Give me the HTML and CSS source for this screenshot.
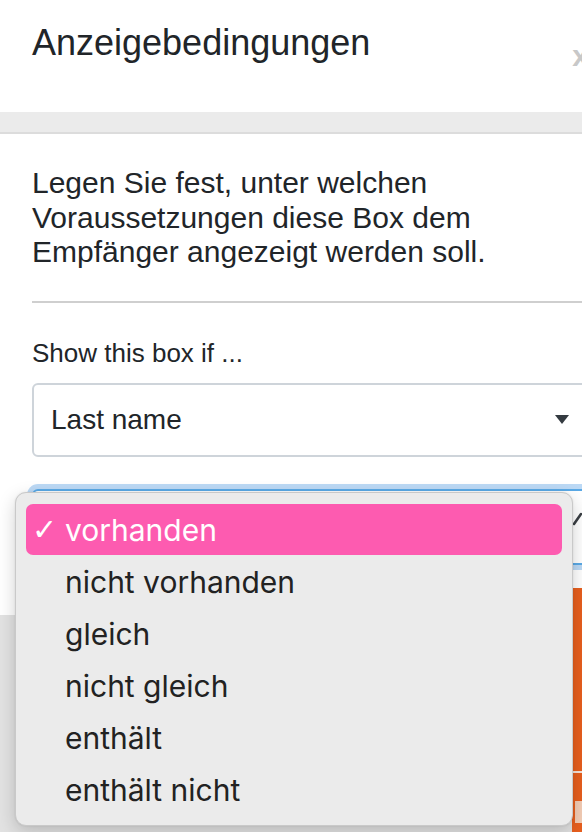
FILE: index.html
```html
<!DOCTYPE html>
<html lang="de">
<head>
<meta charset="utf-8">
<title>Anzeigebedingungen</title>
<link rel="stylesheet" href="styles.css">
</head>
<body>
<div class="modal">
  <div class="modal-header">
    <h4 class="modal-title">Anzeigebedingungen</h4>
    <span class="close">x</span>
  </div>
  <div class="band"></div>
  <div class="modal-body">
    <p class="intro">Legen Sie fest, unter welchen Voraussetzungen diese Box dem Empfänger angezeigt werden soll.</p>
    <hr class="divider">
    <label class="label">Show this box if ...</label>
    <div class="select">
      <span class="select-value">Last name</span>
      <svg class="caret" width="14" height="9" viewBox="0 0 14 9"><path d="M0 0H14L7 9Z" fill="#343a40"/></svg>
    </div>
    <div class="select focused">
      <span class="select-value">vorhanden</span>
      <svg class="chev" width="12" height="14" viewBox="0 0 12 14"><path d="M2 12L9 2" stroke="#3a3f44" stroke-width="2.6" stroke-linecap="round" fill="none"/></svg>
    </div>
  </div>
  <div class="modal-footer"></div>
</div>

<div class="side-button">
  <div class="side-line"></div>
  <div class="side-chip"></div>
</div>

<ul class="menu">
  <li class="item selected"><span class="check">✓</span><span>vorhanden</span></li>
  <li class="item"><span class="check"></span><span>nicht vorhanden</span></li>
  <li class="item"><span class="check"></span><span>gleich</span></li>
  <li class="item"><span class="check"></span><span>nicht gleich</span></li>
  <li class="item"><span class="check"></span><span>enthält</span></li>
  <li class="item"><span class="check"></span><span>enthält nicht</span></li>
</ul>
</body>
</html>
```

FILE: styles.css
```css
html, body {
  margin: 0;
  padding: 0;
  overflow: hidden;
  height: 832px;
}
body {
  background: #e2e2e2;
  font-family: "Liberation Sans", Arial, Helvetica, sans-serif;
  color: #212529;
  position: relative;
}
.modal {
  width: 640px;
  display: flex;
  flex-direction: column;
}
.modal-header {
  height: 112px;
  box-sizing: border-box;
  background: #fff;
  display: flex;
  align-items: flex-start;
  padding: 23px 0 0 32px;
}
.modal-title {
  margin: 0;
  font-size: 36px;
  font-weight: normal;
  line-height: 40px;
  color: #212529;
  white-space: nowrap;
}
.close {
  margin-left: 202px;
  margin-top: 18px;
  font-size: 30px;
  line-height: 30px;
  font-weight: bold;
  color: #c8c8c8;
}
.band {
  height: 20px;
  background: #ebebeb;
  border-bottom: 2px solid #dcdcdc;
}
.modal-body {
  background: #fff;
  padding: 32px 52px 48px 32px;
  height: 481px;
  box-sizing: border-box;
}
.intro {
  margin: 0;
  max-width: 470px;
  font-size: 30px;
  line-height: 34.5px;
}
.divider {
  margin: 31px -52px 0 0;
  border: 0;
  height: 2px;
  background: #cfcfcf;
}
.label {
  display: block;
  margin-top: 35px;
  font-size: 26px;
  line-height: 30px;
}
.select {
  margin-top: 15px;
  height: 74px;
  box-sizing: border-box;
  border: 2px solid #ced4da;
  border-radius: 6px;
  display: flex;
  align-items: center;
  padding: 0 17px 0 17px;
  background: #fff;
}
.select-value {
  flex: 1;
  font-size: 28px;
}
.select.focused {
  margin-top: 32px;
  height: 76px;
  border-color: #5aa9e6;
  box-shadow: 0 0 0 5px #bcd9f5;
}
.chev {
  margin-top: -16px;
  margin-right: -15px;
}
.modal-footer {
  flex: 1;
  background: #e2e2e2;
}
.side-button {
  position: absolute;
  left: 572px;
  top: 588px;
  width: 20px;
  height: 244px;
  background: #e85f1e;
}
.side-line {
  margin-top: 183px;
  height: 2px;
  background: #f6e4da;
}
.side-chip {
  margin: 28px 0 0 3px;
  height: 22px;
  background: #f4cdb5;
}
.menu {
  position: absolute;
  left: 15px;
  top: 492px;
  width: 558px;
  height: 334px;
  box-sizing: border-box;
  margin: 0;
  padding: 11px 10px 0 10px;
  list-style: none;
  background: #ebebeb;
  border: 1px solid #c9c9c9;
  border-radius: 11px;
  box-shadow: 0 6px 18px rgba(0, 0, 0, 0.18), 0 0 2px rgba(0, 0, 0, 0.1);
  font-family: "Inter", "Liberation Sans", sans-serif;
}
.item {
  height: 52px;
  display: flex;
  align-items: center;
  padding-left: 6px;
  font-size: 30px;
  color: #222;
  border-radius: 7px;
}
.item.selected {
  background: #fd5bb0;
  color: #fff;
  height: 51px;
  margin-bottom: 1px;
}
.check {
  width: 33px;
  flex: none;
  font-size: 30px;
  font-family: "DejaVu Sans", sans-serif;
  color: #fff;
}
```
